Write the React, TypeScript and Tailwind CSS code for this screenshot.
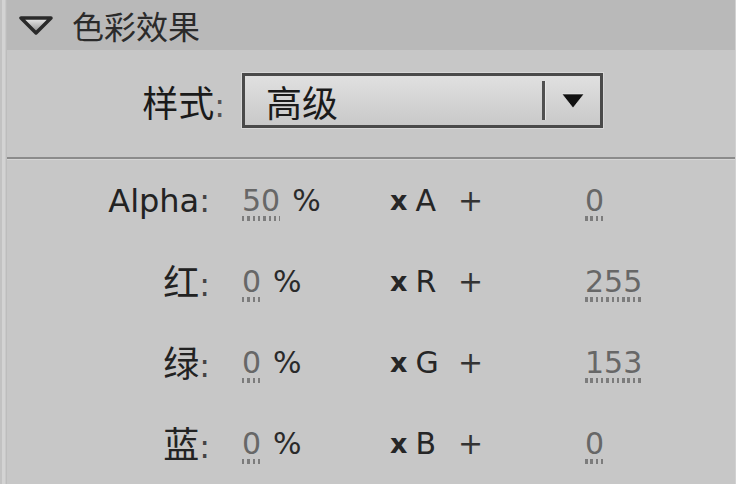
const latin = "font-['DejaVu_Sans','Noto_Sans_CJK_SC',sans-serif]";
const cjk = "font-['Noto_Sans_CJK_SC','DejaVu_Sans',sans-serif]";

type Row = { label: string; cjkLabel: boolean; mult: string; ch: string; offset: string };

const rows: Row[] = [
  { label: 'Alpha', cjkLabel: false, mult: '50', ch: 'A', offset: '0' },
  { label: '红', cjkLabel: true, mult: '0', ch: 'R', offset: '255' },
  { label: '绿', cjkLabel: true, mult: '0', ch: 'G', offset: '153' },
  { label: '蓝', cjkLabel: true, mult: '0', ch: 'B', offset: '0' },
];

function HotText({ value }: { value: string }) {
  return (
    <span className="relative inline-block text-[#676767]">
      {value}
      <span className="absolute left-0 right-0 -bottom-[5px] h-[5px] bg-[repeating-linear-gradient(90deg,#7c7c7c_0_2.5px,transparent_2.5px_5.3px)]" />
    </span>
  );
}

function PanelRow({ row }: { row: Row }) {
  return (
    <div className={`flex h-[81px] items-center text-[30px] leading-none ${latin}`}>
      <div className="w-[203px] text-right text-[32px] text-[#222]">
        {row.cjkLabel ? <span className={`${cjk} text-[36px]`}>{row.label}</span> : row.label}
        <span className="text-[#444]">:</span>
      </div>
      <div className="ml-[32px] flex w-[148px] items-center gap-[12px]">
        <HotText value={row.mult} />
        <span className="text-[#2a2a2a]">%</span>
      </div>
      <div className="flex w-[68px] items-center gap-[8px] text-[#262626]">
        <span className="text-[27px] font-bold">x</span>
        <span>{row.ch}</span>
      </div>
      <div className="w-[127px] text-[#333]">+</div>
      <HotText value={row.offset} />
    </div>
  );
}

export default function App() {
  return (
    <div className="flex h-[484px] w-[736px] overflow-hidden bg-[#c7c7c7]">
      {/* left edge */}
      <div className="w-[7px] border-r border-[#bdbdbd] bg-[linear-gradient(90deg,#c2c2c2_0_2px,#d3d3d3_2px_5px,#c9c9c9_5px)]" />

      <div className="flex flex-1 flex-col border-r border-[#d2d2d2]">
        {/* header */}
        <div className="flex h-[50px] items-center bg-[#b9b9b9] pl-[11px]">
          <svg width="36" height="20" viewBox="0 0 36 20">
            <defs>
              <linearGradient id="tri" x1="0" y1="0" x2="0" y2="1">
                <stop offset="0" stopColor="#eeeeee" />
                <stop offset="1" stopColor="#8a8a8a" />
              </linearGradient>
            </defs>
            <polygon points="3,3 33,3 18,18" fill="url(#tri)" stroke="#2a2a2a" strokeWidth="3.5" strokeLinejoin="round" />
          </svg>
          <span className={`ml-[18px] text-[32px] leading-none text-[#2b2b2b] ${cjk}`}>色彩效果</span>
        </div>

        {/* style selector */}
        <div className="flex h-[107px] items-start pt-[23px]">
          <div className={`w-[218px] pt-[10px] text-right text-[36px] leading-none text-[#1a1a1a] ${cjk}`}>
            样式<span className={`${latin} text-[32px] text-[#555]`}>:</span>
          </div>
          <div className="ml-[17px] flex h-[55px] w-[361px] items-center border-[3px] border-[#4a4a4a] bg-[linear-gradient(180deg,#e0e0e0,#c9c9c9)] shadow-[0_0_0_1px_#d8d8d8]">
            <span className={`ml-[21px] flex-1 text-[36px] leading-none text-[#1a1a1a] ${cjk}`}>高级</span>
            <div className="h-[39px] w-[3px] bg-[#505050] shadow-[1px_0_0_#e6e6e6]" />
            <div className="flex w-[55px] items-center justify-center">
              <svg width="24" height="18" viewBox="0 0 24 18">
                <polygon points="1,2 23,2 12,16" fill="#111" stroke="#f2f2f2" strokeWidth="1" strokeOpacity="0.6" />
              </svg>
            </div>
          </div>
        </div>

        {/* divider */}
        <div className="h-[3px] border-b border-[#d6d6d6] bg-[#8b8b8b]" />

        {/* rows */}
        <div className="flex flex-col">
          {rows.map((r) => (
            <PanelRow key={r.ch} row={r} />
          ))}
        </div>
      </div>
    </div>
  );
}
